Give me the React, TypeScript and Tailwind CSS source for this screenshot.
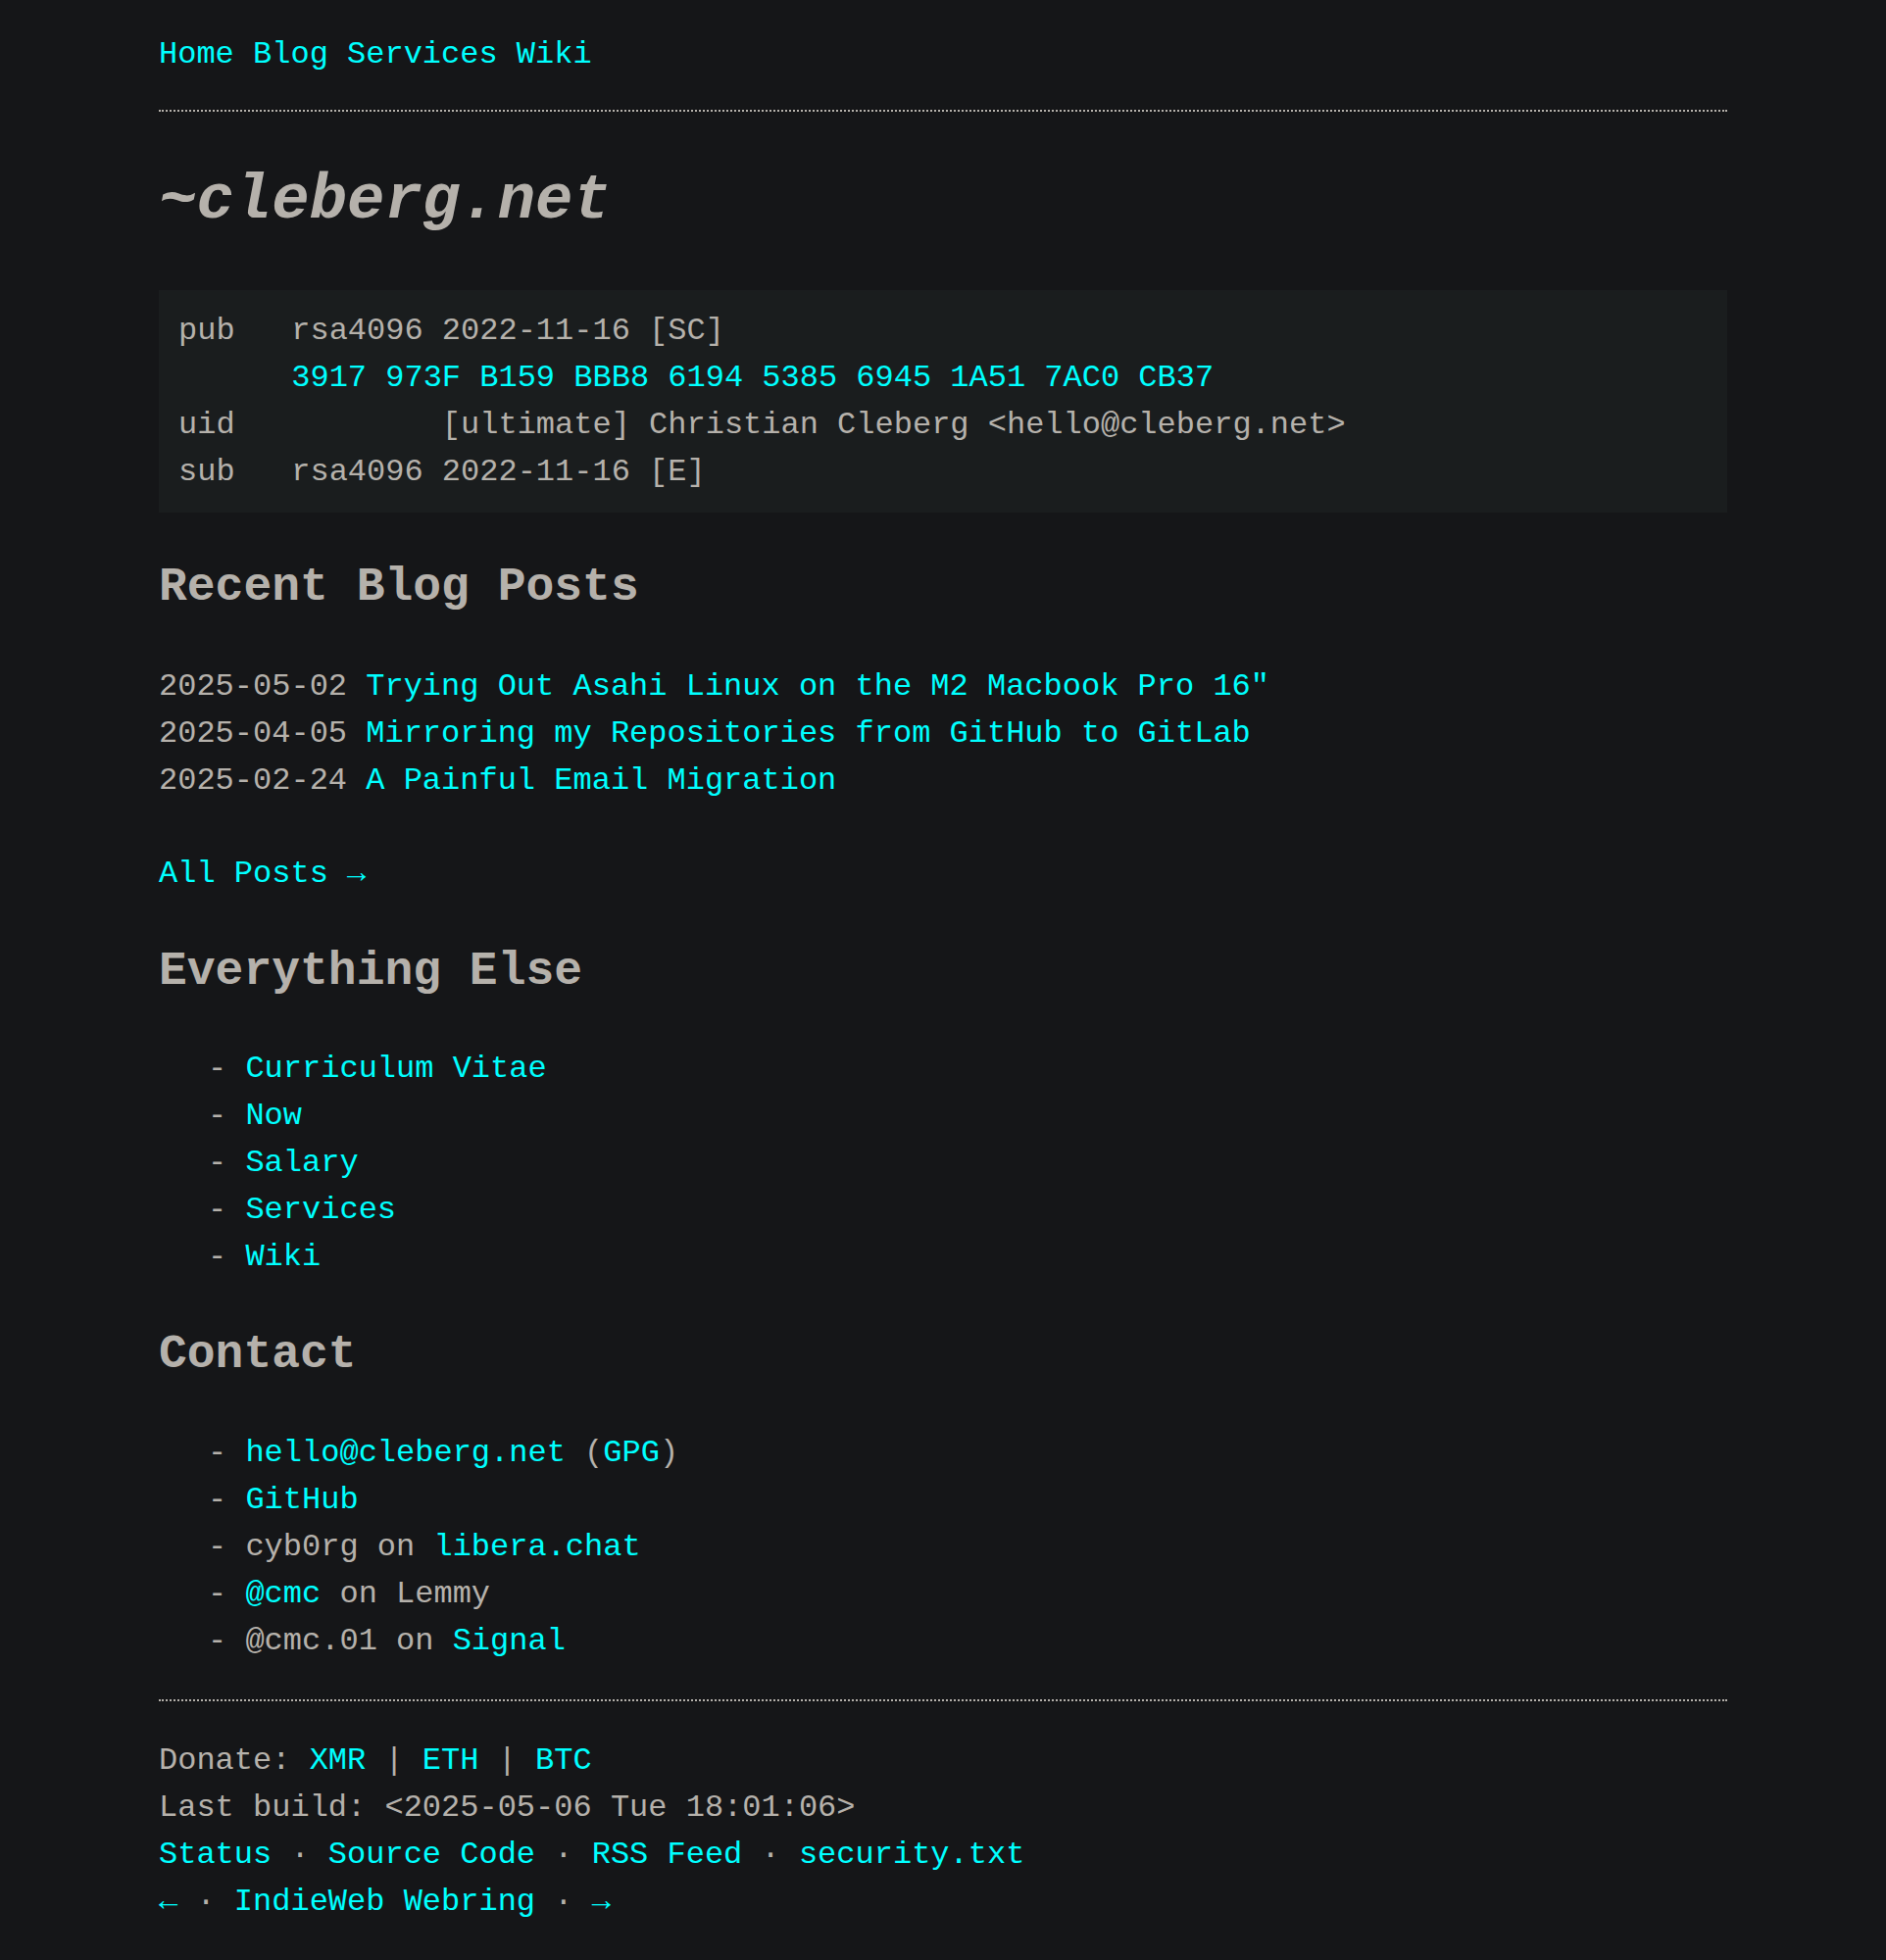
import React from "react";

const posts = [
  { date: "2025-05-02", title: "Trying Out Asahi Linux on the M2 Macbook Pro 16\"" },
  { date: "2025-04-05", title: "Mirroring my Repositories from GitHub to GitLab" },
  { date: "2025-02-24", title: "A Painful Email Migration" },
];

const everythingElse = ["Curriculum Vitae", "Now", "Salary", "Services", "Wiki"];

const A: React.FC<{ children: React.ReactNode }> = ({ children }) => (
  <a href="#" className="text-[#00ffff] no-underline">
    {children}
  </a>
);

const Dot = () => <span>{" · "}</span>;

const App: React.FC = () => {
  return (
    <div className="min-h-screen bg-[#151618] text-[#b5b1ab] font-['Liberation_Mono',monospace] text-[32px] leading-[1.5]">
      <div className="max-w-[1600px] mx-auto pt-8 pb-10 whitespace-pre">
        {/* Nav */}
        <nav>
          <A>Home</A> <A>Blog</A> <A>Services</A> <A>Wiki</A>
        </nav>
        <div className="mt-8 border-t-2 border-dotted border-[#b5b1ab]" />

        {/* Title */}
        <h1 className="my-[43px] text-[64px] font-bold italic leading-[1.5]">~cleberg.net</h1>

        {/* GPG key */}
        <pre className="bg-[#1a1d1e] px-5 py-[17.5px] font-['Liberation_Mono',monospace] text-[32px] leading-[1.5]">
          {"pub   rsa4096 2022-11-16 [SC]\n      "}
          <span className="text-[#00ffff]">3917 973F B159 BBB8 6194 5385 6945 1A51 7AC0 CB37</span>
          {"\nuid           [ultimate] Christian Cleberg <hello@cleberg.net>\nsub   rsa4096 2022-11-16 [E]"}
        </pre>

        {/* Recent posts */}
        <h2 className="mt-10 mb-[42px] text-[48px] font-bold leading-[1.5]">Recent Blog Posts</h2>
        <div>
          {posts.map((p) => (
            <div key={p.date}>
              {p.date} <A>{p.title}</A>
            </div>
          ))}
        </div>
        <div className="mt-[47px]">
          <A>All Posts →</A>
        </div>

        {/* Everything else */}
        <h2 className="mt-[39px] mb-10 text-[48px] font-bold leading-[1.5]">Everything Else</h2>
        <ul className="pl-[50px]">
          {everythingElse.map((item) => (
            <li key={item}>
              {"- "}
              <A>{item}</A>
            </li>
          ))}
        </ul>

        {/* Contact */}
        <h2 className="mt-[39px] mb-[41px] text-[48px] font-bold leading-[1.5]">Contact</h2>
        <ul className="pl-[50px]">
          <li>
            {"- "}
            <A>hello@cleberg.net</A> (<A>GPG</A>)
          </li>
          <li>
            {"- "}
            <A>GitHub</A>
          </li>
          <li>
            {"- cyb0rg on "}
            <A>libera.chat</A>
          </li>
          <li>
            {"- "}
            <A>@cmc</A>
            {" on Lemmy"}
          </li>
          <li>
            {"- @cmc.01 on "}
            <A>Signal</A>
          </li>
        </ul>

        {/* Footer */}
        <footer className="mt-[35px] border-t-2 border-dotted border-[#b5b1ab] pt-[37px]">
          <div>
            {"Donate: "}
            <A>XMR</A>
            {" | "}
            <A>ETH</A>
            {" | "}
            <A>BTC</A>
          </div>
          <div>Last build: &lt;2025-05-06 Tue 18:01:06&gt;</div>
          <div>
            <A>Status</A>
            <Dot />
            <A>Source Code</A>
            <Dot />
            <A>RSS Feed</A>
            <Dot />
            <A>security.txt</A>
          </div>
          <div>
            <A>←</A>
            <Dot />
            <A>IndieWeb Webring</A>
            <Dot />
            <A>→</A>
          </div>
        </footer>
      </div>
    </div>
  );
};

export default App;
